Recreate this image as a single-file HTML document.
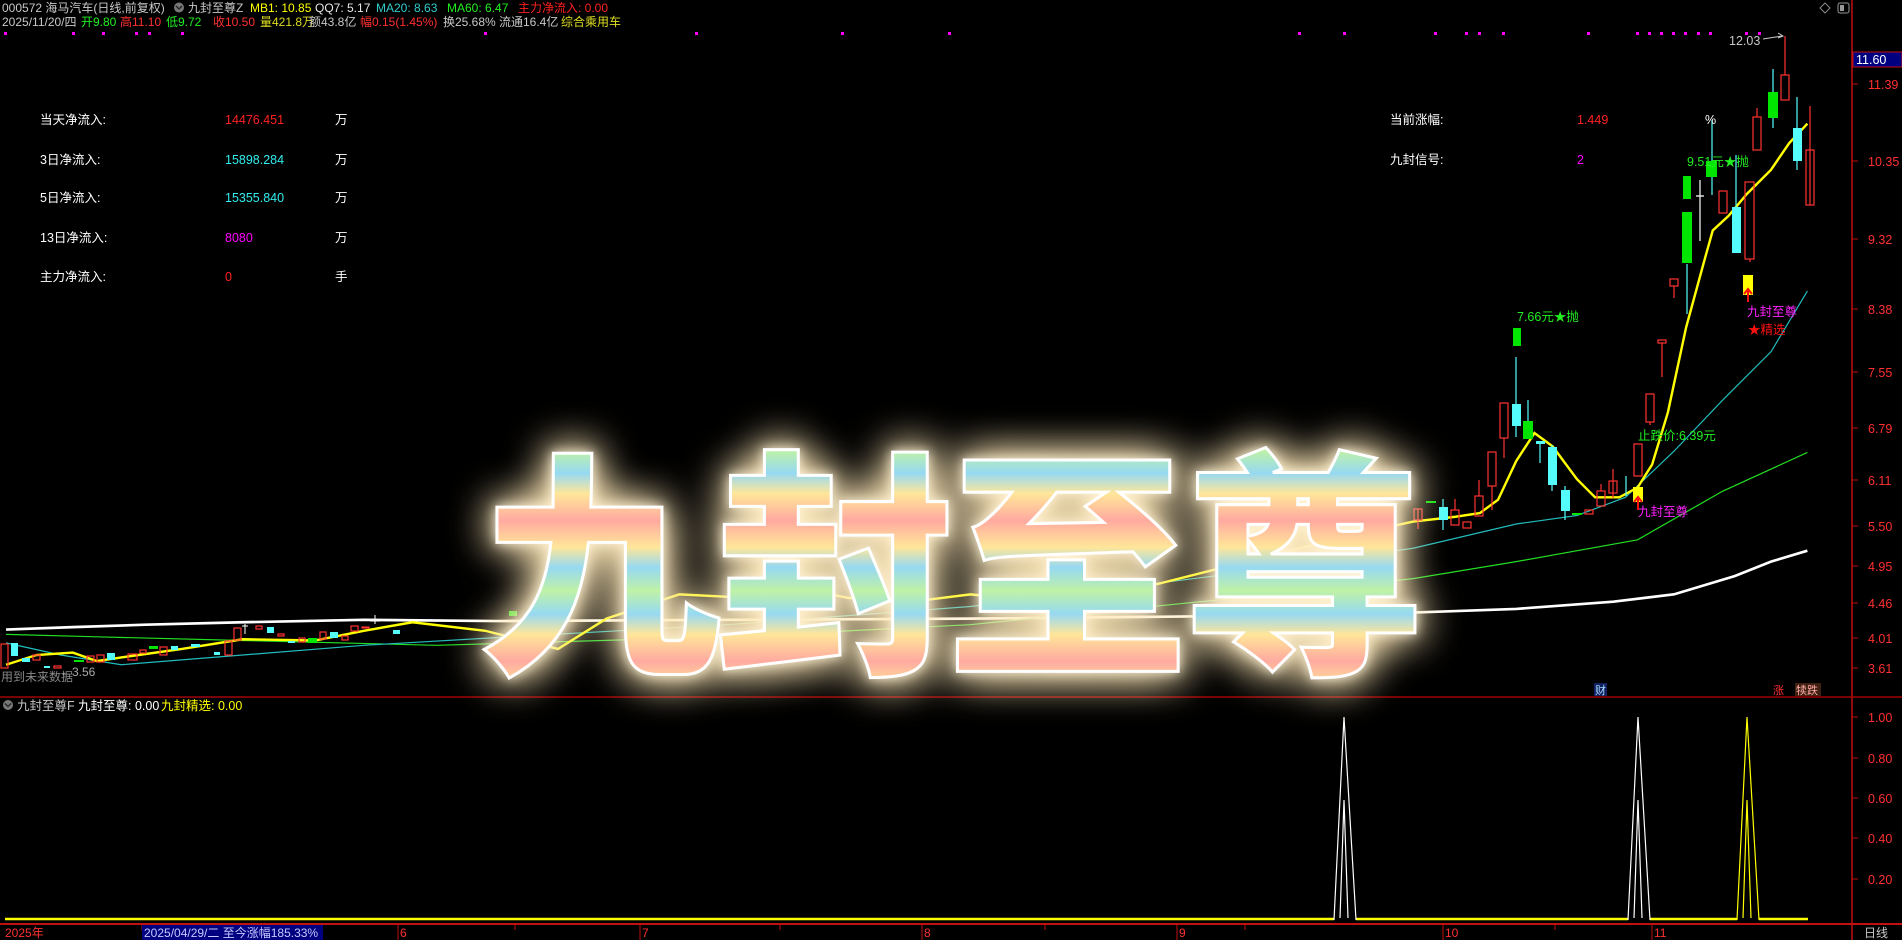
<!DOCTYPE html>
<html><head><meta charset="utf-8"><style>
html,body{margin:0;padding:0;background:#000;width:1902px;height:940px;overflow:hidden}
svg{display:block}
text{font-family:"Liberation Sans","Noto Sans CJK SC",sans-serif}
</style></head><body>
<svg width="1902" height="940" viewBox="0 0 1902 940" xmlns="http://www.w3.org/2000/svg">
<defs>
<linearGradient id="rb" gradientUnits="userSpaceOnUse" x1="0" y1="371" x2="0" y2="429" spreadMethod="reflect">
<stop offset="0" stop-color="#bff2a6"/><stop offset="0.33" stop-color="#96d9f2"/><stop offset="0.62" stop-color="#ffe699"/><stop offset="1" stop-color="#ffaaa0"/>
</linearGradient>
<filter id="glow" x="-25%" y="-50%" width="150%" height="200%">
<feGaussianBlur in="SourceAlpha" stdDeviation="18" result="b"/>
<feFlood flood-color="#ffe9b8" flood-opacity="1"/>
<feComposite in2="b" operator="in" result="g"/>
<feGaussianBlur in="SourceAlpha" stdDeviation="5" result="b2"/>
<feFlood flood-color="#fff4d8" flood-opacity="0.9"/>
<feComposite in2="b2" operator="in" result="g2"/>
<feMerge><feMergeNode in="g"/><feMergeNode in="g"/><feMergeNode in="g2"/><feMergeNode in="SourceGraphic"/></feMerge>
</filter>
</defs>

<!-- header -->
<g font-size="12">
<text x="2" y="12" fill="#c8c8c8">000572 海马汽车(日线,前复权)</text>
<circle cx="179" cy="7.5" r="5" fill="#777"/><path d="M176 6 L179 9 L182 6" stroke="#222" stroke-width="1.3" fill="none"/>
<text x="188" y="12" fill="#c8c8c8">九封至尊Z</text>
<text x="250" y="12" fill="#ffff00">MB1: 10.85</text>
<text x="315" y="12" fill="#e8e8e8">QQ7: 5.17</text>
<text x="376" y="12" fill="#33cccc">MA20: 8.63</text>
<text x="447" y="12" fill="#22ee22">MA60: 6.47</text>
<text x="518" y="12" fill="#ff2020">主力净流入: 0.00</text>
<text x="2" y="26" fill="#c8c8c8">2025/11/20/四</text>
<text x="81" y="26" fill="#22ee22">开9.80</text>
<text x="120" y="26" fill="#ff3030">高11.10</text>
<text x="166" y="26" fill="#22ee22">低9.72</text>
<text x="213" y="26" fill="#ff3030">收10.50</text>
<text x="260" y="26" fill="#dddd22">量421.8万</text>
<text x="309" y="26" fill="#c8c8c8">额43.8亿</text>
<text x="360" y="26" fill="#ff3030">幅0.15(1.45%)</text>
<text x="443" y="26" fill="#c8c8c8">换25.68%</text>
<text x="499" y="26" fill="#c8c8c8">流通16.4亿</text>
<text x="561" y="26" fill="#dddd22">综合乘用车</text>
</g>

<!-- top-right icons -->
<path d="M1825 3 L1830 8 L1825 13 L1820 8 Z" fill="none" stroke="#888"/>
<rect x="1838" y="3" width="11" height="10" rx="2" fill="none" stroke="#999"/>
<rect x="1840" y="5" width="4" height="6" fill="#999"/>

<!-- magenta dots -->
<g fill="#ff00ff">
<rect x="4" y="32" width="3" height="3"/><rect x="72" y="32" width="3" height="3"/><rect x="102" y="32" width="3" height="3"/><rect x="135" y="32" width="3" height="3"/><rect x="148" y="32" width="3" height="3"/><rect x="181" y="32" width="3" height="3"/><rect x="484" y="32" width="3" height="3"/><rect x="695" y="32" width="3" height="3"/><rect x="841" y="32" width="3" height="3"/><rect x="948" y="32" width="3" height="3"/><rect x="1298" y="32" width="3" height="3"/><rect x="1343" y="32" width="3" height="3"/><rect x="1434" y="32" width="3" height="3"/><rect x="1465" y="32" width="3" height="3"/><rect x="1478" y="32" width="3" height="3"/><rect x="1502" y="32" width="3" height="3"/><rect x="1587" y="32" width="3" height="3"/><rect x="1636" y="32" width="3" height="3"/><rect x="1648" y="32" width="3" height="3"/><rect x="1660" y="32" width="3" height="3"/><rect x="1672" y="32" width="3" height="3"/><rect x="1684" y="32" width="3" height="3"/><rect x="1697" y="32" width="3" height="3"/><rect x="1709" y="32" width="3" height="3"/><rect x="1745" y="32" width="3" height="3"/><rect x="1758" y="32" width="3" height="3"/>
</g>

<!-- left info panel -->
<g font-size="12.5" fill="#fff">
<text x="40" y="124">当天净流入:</text><text x="225" y="124" fill="#ff2020">14476.451</text><text x="335" y="124">万</text>
<text x="40" y="164">3日净流入:</text><text x="225" y="164" fill="#33eeee">15898.284</text><text x="335" y="164">万</text>
<text x="40" y="202">5日净流入:</text><text x="225" y="202" fill="#33eeee">15355.840</text><text x="335" y="202">万</text>
<text x="40" y="242">13日净流入:</text><text x="225" y="242" fill="#ff00ff">8080</text><text x="335" y="242">万</text>
<text x="40" y="281">主力净流入:</text><text x="225" y="281" fill="#ff2020">0</text><text x="335" y="281">手</text>
<text x="1390" y="124">当前涨幅:</text><text x="1577" y="124" fill="#ff2020">1.449</text>
<text x="1390" y="164">九封信号:</text><text x="1577" y="164" fill="#ff00ff">2</text>
</g>

<!-- axes -->
<line x1="1852" y1="0" x2="1852" y2="940" stroke="#c01010" stroke-width="1.5"/>
<line x1="0" y1="697" x2="1902" y2="697" stroke="#a00000" stroke-width="1.5"/>
<line x1="0" y1="924" x2="1902" y2="924" stroke="#c01010" stroke-width="2"/>
<rect x="1853" y="52" width="49" height="15" fill="#000080" stroke="#c01010"/>
<text x="1856" y="64" font-size="12.5" fill="#fff">11.60</text>
<g font-size="12.5" fill="#ff3030">
<text x="1868" y="89">11.39</text><text x="1868" y="166">10.35</text><text x="1868" y="244">9.32</text><text x="1868" y="314">8.38</text><text x="1868" y="377">7.55</text><text x="1868" y="433">6.79</text><text x="1868" y="485">6.11</text><text x="1868" y="531">5.50</text><text x="1868" y="571">4.95</text><text x="1868" y="608">4.46</text><text x="1868" y="643">4.01</text><text x="1868" y="673">3.61</text>
<text x="1868" y="722">1.00</text><text x="1868" y="763">0.80</text><text x="1868" y="803">0.60</text><text x="1868" y="843">0.40</text><text x="1868" y="884">0.20</text>
</g>
<g stroke="#c01010">
<line x1="1852" y1="84" x2="1858" y2="84"/><line x1="1852" y1="161" x2="1858" y2="161"/><line x1="1852" y1="239" x2="1858" y2="239"/><line x1="1852" y1="309" x2="1858" y2="309"/><line x1="1852" y1="372" x2="1858" y2="372"/><line x1="1852" y1="428" x2="1858" y2="428"/><line x1="1852" y1="480" x2="1858" y2="480"/><line x1="1852" y1="526" x2="1858" y2="526"/><line x1="1852" y1="566" x2="1858" y2="566"/><line x1="1852" y1="603" x2="1858" y2="603"/><line x1="1852" y1="638" x2="1858" y2="638"/><line x1="1852" y1="668" x2="1858" y2="668"/>
<line x1="1852" y1="717" x2="1858" y2="717"/><line x1="1852" y1="758" x2="1858" y2="758"/><line x1="1852" y1="798" x2="1858" y2="798"/><line x1="1852" y1="838" x2="1858" y2="838"/><line x1="1852" y1="879" x2="1858" y2="879"/>
<line x1="142" y1="924" x2="142" y2="930"/><line x1="398" y1="924" x2="398" y2="940"/><line x1="640" y1="924" x2="640" y2="940"/><line x1="922" y1="924" x2="922" y2="940"/><line x1="1177" y1="924" x2="1177" y2="940"/><line x1="1443" y1="924" x2="1443" y2="940"/><line x1="1652" y1="924" x2="1652" y2="940"/>
<line x1="515" y1="924" x2="515" y2="930"/><line x1="780" y1="924" x2="780" y2="930"/><line x1="1045" y1="924" x2="1045" y2="930"/><line x1="1245" y1="924" x2="1245" y2="930"/><line x1="1555" y1="924" x2="1555" y2="930"/>
</g>
<g font-size="12" fill="#ff3030">
<text x="5" y="937">2025年</text>
<text x="400" y="937">6</text><text x="642" y="937">7</text><text x="924" y="937">8</text><text x="1179" y="937">9</text><text x="1445" y="937">10</text><text x="1654" y="937">11</text>
</g>
<rect x="142" y="925" width="181" height="15" fill="#000080"/>
<text x="144" y="937" font-size="12" fill="#c8c8ff">2025/04/29/二 至今涨幅185.33%</text>
<text x="1864" y="937" font-size="12" fill="#c8c8c8">日线</text>

<!-- lower panel -->
<circle cx="8" cy="705" r="5" fill="#777"/><path d="M5 703.5 L8 706.5 L11 703.5" stroke="#222" stroke-width="1.3" fill="none"/>
<g font-size="12.5"><text x="17" y="710" fill="#c8c8c8">九封至尊F</text><text x="78" y="710" fill="#fff">九封至尊: 0.00</text><text x="161" y="710" fill="#ffff00">九封精选: 0.00</text></g>
<path d="M5 919 H1334 M1356 919 H1628 M1650 919 H1737 M1759 919 H1808" stroke="#ffff00" stroke-width="2.5"/>
<path d="M1334 920 L1344 717 L1356 920 M1340 918 L1344 800 L1348 918" stroke="#fff" stroke-width="1.2" fill="none"/>
<path d="M1628 920 L1638 717 L1650 920 M1634 918 L1638 800 L1642 918" stroke="#fff" stroke-width="1.2" fill="none"/>
<path d="M1737 920 L1747 717 L1759 920 M1743 918 L1747 800 L1751 918" stroke="#ffff00" stroke-width="1.2" fill="none"/>

<!-- moving averages (displayed coords) -->
<g transform="scale(1.2130)" fill="none">
<path d="M5 519 L60 517 L120 515 L200 513 L300 511 L410 512 L600 511 L800 510 L1000 508 L1165 505 L1250 502 L1330 496 L1380 490 L1430 475 L1460 463 L1490 454" stroke="#fff" stroke-width="2.2"/>
<path d="M5 523 L80 525 L200 528 L360 532 L600 525 L800 515 L1000 495 L1165 477 L1250 463 L1350 445 L1420 405 L1490 373" stroke="#22dd22" stroke-width="1"/>
<path d="M5 530 L50 540 L100 548 L200 540 L300 532 L420 525 L600 515 L800 500 L1000 475 L1165 452 L1250 432 L1300 425 L1340 410 L1380 372 L1420 330 L1460 290 L1490 240" stroke="#22bbbb" stroke-width="1"/>
<path d="M5 548 L30 540 L60 538 L80 545 L100 542 L150 535 L200 527 L260 528 L300 520 L340 513 L400 520 L460 535 L500 510 L560 490 L600 492 L660 485 L700 493 L760 495 L800 490 L850 495 L900 495 L960 480 L1000 470 L1060 455 L1120 440 L1165 430 L1200 426 L1220 423 L1235 412 L1250 380 L1265 357 L1280 368 L1300 395 L1315 410 L1335 410 L1350 402 L1362 383 L1375 340 L1390 270 L1405 215 L1412 190 L1425 178 L1440 160 L1460 140 L1475 118 L1490 102" stroke="#ffff00" stroke-width="2"/>
</g>

<!-- left candles -->
<g stroke="#ff3232" fill="none" stroke-width="1.2">
<rect x="1" y="644" width="7" height="24"/><rect x="33" y="655" width="7" height="5"/><rect x="54" y="666" width="7" height="2"/><rect x="87" y="656" width="7" height="6"/><rect x="97" y="655" width="7" height="7"/><rect x="128" y="654" width="9" height="6"/><rect x="140" y="650" width="6" height="3"/><rect x="160" y="647" width="7" height="8"/><rect x="225" y="641" width="7" height="14"/><rect x="234" y="628" width="7" height="12"/><rect x="256" y="626" width="6" height="3"/><rect x="278" y="634" width="6" height="2"/><rect x="299" y="638" width="6" height="4"/><rect x="320" y="632" width="6" height="7"/><rect x="342" y="636" width="6" height="4"/><rect x="351" y="626" width="7" height="5"/><rect x="362" y="627" width="7" height="1"/>
</g>
<g fill="#54fcfc">
<rect x="11" y="643" width="7" height="13"/><rect x="22" y="658" width="8" height="4"/><rect x="44" y="666" width="6" height="2"/><rect x="107" y="653" width="8" height="7"/><rect x="171" y="646" width="7" height="4"/><rect x="191" y="644" width="9" height="3"/><rect x="214" y="652" width="6" height="3"/><rect x="267" y="627" width="7" height="6"/><rect x="288" y="641" width="7" height="2"/><rect x="330" y="632" width="8" height="6"/><rect x="393" y="630" width="7" height="4"/>
</g>
<g fill="#00e600"><rect x="74" y="660" width="10" height="2"/><rect x="149" y="646" width="9" height="3"/><rect x="308" y="638" width="9" height="5"/><rect x="509" y="611" width="8" height="5"/></g>
<path d="M245 624 V634 M242 626 H248 M375 615 V624 M370 621 H380" stroke="#fff"/>
<text x="1" y="681" font-size="12" fill="#888">用到未来数据</text>
<text x="60" y="676" font-size="12" fill="#aaa">←3.56</text>

<!-- right candles -->
<g stroke="#ff3232" fill="none" stroke-width="1.2">
<path d="M1418 509 V529 M1455 499 V510 M1479 480 V496 M1492 486 V510 M1504 438 V458 M1613 469 V498 M1601 484 V491 M1650 422 V425 M1662 343 V377 M1674 286 V298 M1785 36 V75 M1757 108 V117 M1810 106 V205 M1750 259 V262"/>
<rect x="1414" y="509" width="8" height="11"/><rect x="1451" y="510" width="8" height="15"/><rect x="1463" y="522" width="8" height="6"/><rect x="1475" y="496" width="8" height="20"/><rect x="1488" y="452" width="8" height="34"/><rect x="1500" y="403" width="8" height="35"/><rect x="1585" y="510" width="8" height="4"/><rect x="1597" y="491" width="8" height="15"/><rect x="1609" y="481" width="8" height="12"/><rect x="1634" y="444" width="8" height="32"/><rect x="1646" y="394" width="8" height="28"/><rect x="1658" y="340" width="8" height="3"/><rect x="1670" y="279" width="8" height="7"/><rect x="1719" y="191" width="8" height="22"/><rect x="1745" y="182" width="9" height="77"/><rect x="1753" y="117" width="8" height="33"/><rect x="1781" y="75" width="8" height="25"/><rect x="1806" y="150" width="8" height="55"/>
</g>
<g stroke="#54fcfc" stroke-width="1.2"><path d="M1443 499 V530 M1516 357 V437 M1540 442 V463 M1552 445 V491 M1565 486 V520 M1626 476 V496 M1687 264 V314 M1712 120 V195 M1736 155 V240 M1773 69 V128 M1797 97 V170 M1528 400 V421"/></g>
<g fill="#54fcfc"><rect x="1439" y="507" width="9" height="13"/><rect x="1512" y="404" width="9" height="22"/><rect x="1536" y="441" width="9" height="3"/><rect x="1548" y="447" width="9" height="38"/><rect x="1561" y="490" width="9" height="21"/><rect x="1732" y="207" width="9" height="46"/><rect x="1793" y="128" width="9" height="33"/></g>
<g fill="#00e600"><rect x="1426" y="501" width="10" height="2"/><rect x="1523" y="421" width="10" height="18"/><rect x="1572" y="513" width="10" height="2"/><rect x="1682" y="212" width="10" height="51"/><rect x="1683" y="176" width="8" height="23"/><rect x="1706" y="161" width="11" height="16"/><rect x="1768" y="92" width="10" height="26"/><rect x="1513" y="328" width="8" height="18"/></g>
<path d="M1700 180 V241 M1696 196 H1704" stroke="#fff" stroke-width="1.2"/>
<rect x="1633" y="487" width="10" height="15" fill="#ffff00"/>
<rect x="1743" y="275" width="10" height="20" fill="#ffff00"/>
<path d="M1638 498 V510 M1634 502 L1638 497 L1642 502" stroke="#ff1010" stroke-width="2" fill="none"/>
<path d="M1748 290 V302 M1744 294 L1748 289 L1752 294" stroke="#ff1010" stroke-width="2" fill="none"/>
<g font-size="12.5">
<text x="1517" y="321" fill="#22ee22">7.66元★抛</text>
<text x="1638" y="440" fill="#22ee22">止跌价:6.39元</text>
<text x="1638" y="516" fill="#ff22ff">九封至尊</text>
<text x="1747" y="316" fill="#ff22ff">九封至尊</text>
<text x="1748" y="334" fill="#ff1010">★精选</text>
<text x="1687" y="166" fill="#22ee22">9.51元★抛</text>
<text x="1705" y="124" fill="#fff">%</text>
<text x="1729" y="45" fill="#c8c8c8">12.03</text>
</g>
<path d="M1763 39 L1782 36 M1778 33 L1783 36 L1778 38" stroke="#c8c8c8" fill="none"/>
<g font-size="11">
<rect x="1594" y="683" width="13" height="13" fill="#102060"/><text x="1595" y="694" fill="#aaddff">财</text>
<text x="1773" y="694" fill="#ff3030">涨</text>
<rect x="1795" y="683" width="26" height="13" fill="#402010"/><text x="1796" y="694" fill="#ffaaaa">犊跌</text>
</g>

<!-- big title -->
<g transform="scale(1.2130)" filter="url(#glow)">
<g font-family="'Noto Sans CJK SC','WenQuanYi Zen Hei',sans-serif" font-weight="900" font-size="198" fill="url(#rb)" stroke="#fff" stroke-width="2.5" text-anchor="middle">
<text x="495" y="540" font-family="'Noto Sans CJK SC',sans-serif">九</text>
<text x="688" y="540" font-family="'Noto Sans CJK SC',sans-serif">封</text>
<text x="880" y="540" font-family="'Noto Sans CJK SC',sans-serif">至</text>
<text x="1075" y="540" font-family="'Noto Sans CJK SC',sans-serif">尊</text>
</g>
</g>
</svg>
</body></html>
